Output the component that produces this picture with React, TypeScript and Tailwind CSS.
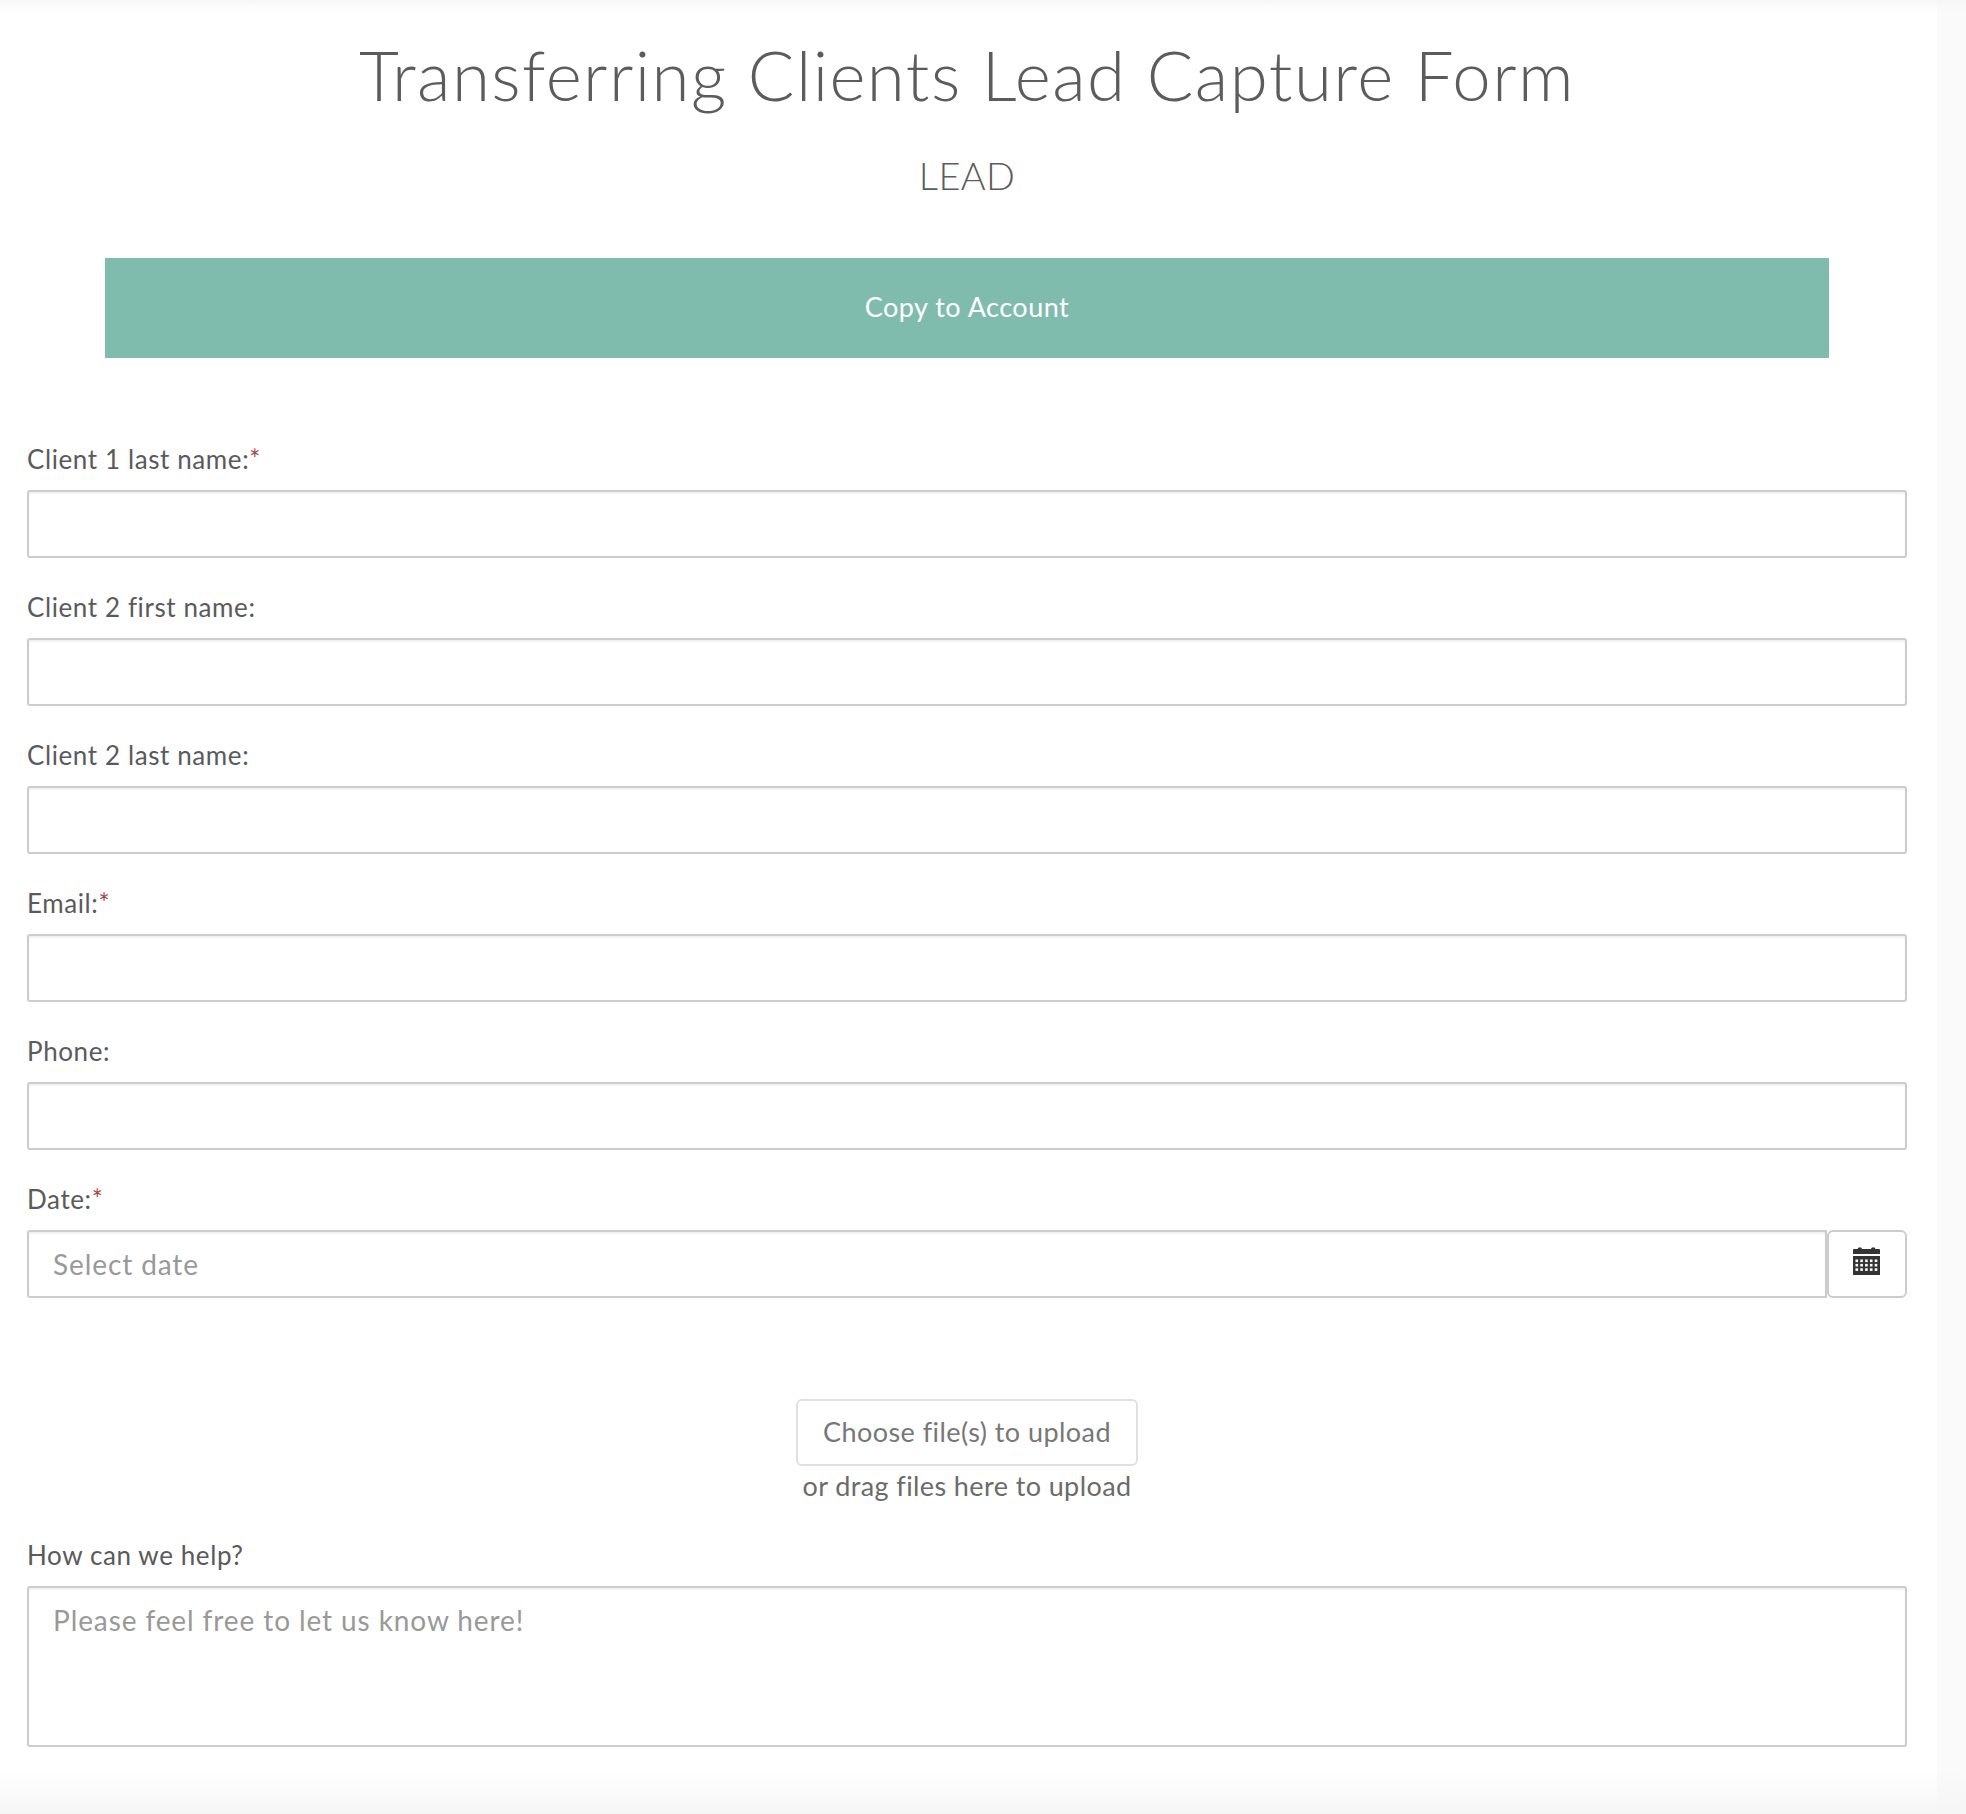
import { useState } from 'react';

const fieldClass =
  'block w-full h-[68px] border-2 border-[#cccccc] rounded-[3px] bg-white px-[24px] text-[28px] tracking-[0.9px] text-[#555555] shadow-[inset_0_2px_2px_rgba(0,0,0,0.06)] outline-none placeholder:text-[#999999]';

function Label({ text, required }: { text: string; required?: boolean }) {
  return (
    <label className="block h-[31px] mb-[15px] text-[26px] tracking-[0.6px] leading-[31px] text-[#5a5a5c]">
      {text}
      {required && <span className="text-[#a94442]">*</span>}
    </label>
  );
}

function CalendarIcon() {
  const dots = [];
  for (let row = 0; row < 3; row++) {
    for (let col = 0; col < 5; col++) {
      dots.push(<rect key={`${row}-${col}`} x={2.5 + col * 4.8} y={13.5 + row * 4.4} width="2.6" height="2.6" fill="#fff" />);
    }
  }
  return (
    <svg width="27" height="29" viewBox="0 0 27 29" fill="#333333">
      <path d="M1 3h3.5a2.4 2.4 0 0 1 4.6 0h8.8a2.4 2.4 0 0 1 4.6 0H26a1 1 0 0 1 1 1v4H0V4a1 1 0 0 1 1-1z" />
      <rect x="0" y="10" width="27" height="19" />
      {dots}
    </svg>
  );
}

export default function App() {
  const [values, setValues] = useState<Record<string, string>>({});

  const fields = [
    { key: 'client1Last', label: 'Client 1 last name:', required: true },
    { key: 'client2First', label: 'Client 2 first name:' },
    { key: 'client2Last', label: 'Client 2 last name:' },
    { key: 'email', label: 'Email:', required: true },
    { key: 'phone', label: 'Phone:' },
  ];

  return (
    <div className="relative flex h-[1814px] overflow-hidden bg-white font-['Lato','Open_Sans',sans-serif]">
      <div className="w-[1937px] pl-[27px] pr-[30px]">
        <h1 className="pt-[36px] h-[130px] text-center text-[69px] tracking-[1.45px] leading-[78px] font-light text-[#5c5c5f]">
          Transferring Clients Lead Capture Form
        </h1>
        <h2 className="h-[128px] pt-[22px] text-center text-[38px] tracking-[0.3px] leading-[46px] font-light text-[#5c5c5f]">LEAD</h2>
        <div className="flex justify-center">
          <button className="w-[1724px] h-[100px] pb-[2px] bg-[#7fbcae] text-[27px] tracking-[0.5px] text-white">Copy to Account</button>
        </div>

        <form className="mt-[86px]">
          {fields.map((f) => (
            <div key={f.key} className="h-[148px]">
              <Label text={f.label} required={f.required} />
              <input
                className={fieldClass}
                value={values[f.key] ?? ''}
                onChange={(e) => setValues({ ...values, [f.key]: e.target.value })}
              />
            </div>
          ))}

          <Label text="Date:" required />
          <div className="flex">
            <input className={`${fieldClass} flex-1 rounded-r-none`} placeholder="Select date" />
            <button type="button" className="flex w-[80px] h-[68px] items-center justify-center rounded-[6px] border-2 border-[#cccccc] bg-white pb-[8px] pr-[2px]">
              <CalendarIcon />
            </button>
          </div>

          <div className="mt-[101px] flex flex-col items-center">
            <button type="button" className="w-[342px] h-[67px] rounded-[6px] border-2 border-[#e0e0e0] bg-white text-[27px] tracking-[0.45px] text-[#777777]">
              Choose file(s) to upload
            </button>
            <p className="mt-[3px] text-[27px] tracking-[0.4px] leading-[33px] text-[#6b6b6b]">or drag files here to upload</p>
          </div>

          <div className="mt-[38px]">
            <Label text="How can we help?" />
            <textarea
              className={`${fieldClass} h-[161px] py-[16px] resize-none leading-[33px]`}
              placeholder="Please feel free to let us know here!"
            />
          </div>
        </form>
      </div>
      <div className="w-[29px] bg-[#fafafa]" />
      <div className="pointer-events-none absolute inset-x-0 top-0 h-[12px] bg-gradient-to-b from-[#f6f6f6] to-transparent" />
      <div className="pointer-events-none absolute inset-x-0 bottom-0 h-[44px] bg-gradient-to-b from-transparent to-[#f5f5f5]" />
    </div>
  );
}
